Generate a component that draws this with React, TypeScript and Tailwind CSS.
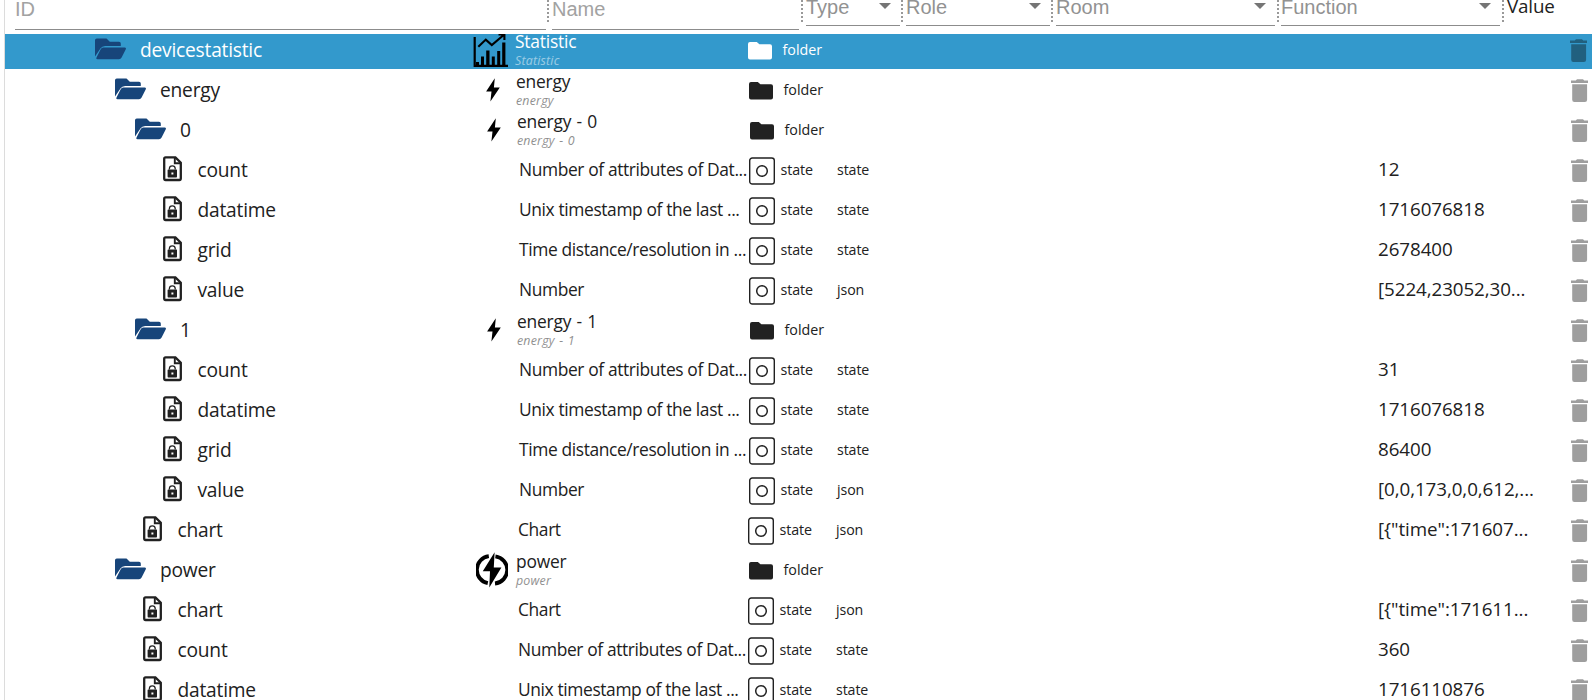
import React from "react";

type Kind = "chart" | "bolt" | "power";

type Item = {
  id: string;
  depth: number;
  name: string;
  icon?: Kind;
  folder?: boolean;
  role?: string;
  value?: string;
};

const stateRows = (depth: number, data: [string, string, string, string][]): Item[] =>
  data.map(([id, name, role, value]) => ({ id, depth, name, role, value }));

const COUNT = "Number of attributes of Dat...";
const UNIX = "Unix timestamp of the last ...";
const TIME = "Time distance/resolution in ...";

const items: Item[] = [
  { id: "devicestatistic", depth: 0, name: "Statistic", icon: "chart", folder: true },
  { id: "energy", depth: 1, name: "energy", icon: "bolt", folder: true },
  { id: "0", depth: 2, name: "energy - 0", icon: "bolt", folder: true },
  ...stateRows(3, [
    ["count", COUNT, "state", "12"],
    ["datatime", UNIX, "state", "1716076818"],
    ["grid", TIME, "state", "2678400"],
    ["value", "Number", "json", "[5224,23052,30..."],
  ]),
  { id: "1", depth: 2, name: "energy - 1", icon: "bolt", folder: true },
  ...stateRows(3, [
    ["count", COUNT, "state", "31"],
    ["datatime", UNIX, "state", "1716076818"],
    ["grid", TIME, "state", "86400"],
    ["value", "Number", "json", "[0,0,173,0,0,612,..."],
  ]),
  ...stateRows(2, [["chart", "Chart", "json", '[{"time":171607...']]),
  { id: "power", depth: 1, name: "power", icon: "power", folder: true },
  ...stateRows(2, [
    ["chart", "Chart", "json", '[{"time":171611...'],
    ["count", COUNT, "state", "360"],
    ["datatime", UNIX, "state", "1716110876"],
  ]),
];

const folderIndent = ["pl-[90px]", "pl-[110px]", "pl-[130px]"];
const stateIndent = ["", "", "pl-[138px]", "pl-[158px]"];
const folderIdCell = ["w-[510px]", "w-[511px]", "w-[512px]"];
const stateIdCell = ["", "", "w-[513px]", "w-[514px]"];

const OpenFolder = () => (
  <svg className="h-[22px] w-[32px] shrink-0" viewBox="0 0 32 22" fill="#17457a">
    <path d="M0 2.2Q0 .5 1.8 .5H11.5L14.8 3.7H24Q25.8 3.7 25.8 5.5V8H10.2Q7 8 5.4 10.6L0 18.5Z" />
    <path d="M8.2 9.4H29.8Q31.6 9.4 30.8 11.2L26.6 19.6Q25.8 21.2 24 21.2H2.4Q.6 21.2 1.5 19.6L5.7 11.2Q6.6 9.4 8.2 9.4Z" />
  </svg>
);

const LockedFile = () => (
  <svg className="h-[26px] w-[20px] shrink-0" viewBox="0 0 20 26">
    <path d="M2.6 1.4H12.4L17.8 6.8V22.6Q17.8 24 16.4 24H2.6Q1.2 24 1.2 22.6V2.8Q1.2 1.4 2.6 1.4Z" fill="none" stroke="#212121" strokeWidth="2.3" />
    <path d="M11.8 1.6V7.2H17.8" fill="none" stroke="#212121" strokeWidth="1.9" />
    <path d="M6.4 13.4V12.6Q6.4 9.8 9.3 9.8Q12.2 9.8 12.2 12.6V13.4" fill="none" stroke="#212121" strokeWidth="1.3" />
    <path fillRule="evenodd" d="M5.3 13.4H13.5Q14 13.4 14 14V20.5Q14 21.4 13.2 21.4H5.4Q4.6 21.4 4.6 20.5V14Q4.6 13.4 5.3 13.4ZM8.4 16.4V18.4H10.4V16.4Z" fill="#212121" />
  </svg>
);

const StateIcon = () => (
  <svg className="h-[28px] w-[26px] shrink-0" viewBox="0 0 26 28" fill="none" stroke="#212121">
    <rect x=".7" y="1" width="24.6" height="26" rx="2.6" strokeWidth="1.4" />
    <circle cx="13" cy="14" r="5.3" strokeWidth="1.5" />
  </svg>
);

const ClosedFolder = ({ white }: { white: boolean }) => (
  <svg className="h-[20px] w-[24px] shrink-0" viewBox="0 0 24 20" fill={white ? "#fff" : "#212121"}>
    <path d="M2 1H8.8L11.4 3.2H22Q24 3.2 24 5.2V16.6Q24 18.6 22 18.6H2Q0 18.6 0 16.6V3Q0 1 2 1Z" />
  </svg>
);

const Trash = () => (
  <svg className="h-[24px] w-[18px] shrink-0" viewBox="0 0 18 24">
    <path d="M0 1.5H4.8L6 .3H12L13.2 1.5H17V4H0ZM1.2 5.3H16.1V20.8Q16.1 23 13.9 23H3.4Q1.2 23 1.2 20.8Z" />
  </svg>
);

const NameIcon = ({ kind }: { kind: Kind }) => {
  if (kind === "chart")
    return (
      <svg className="mr-[7px] h-[35px] w-[35px]" viewBox="0 0 35 35">
        <path d="M1.7 3V31.8H35" fill="none" stroke="#000" strokeWidth="2.2" />
        <path d="M3 28H6V33H3ZM8 22.5H11V33H8ZM13.2 16.5H16.5V33H13.2ZM18.8 22.5H21.8V33H18.8ZM24.2 17H27.2V33H24.2ZM29.2 8.5H32.4V33H29.2Z" />
        <path d="M5.3 12.8L12.8 5.6L18.8 11L31 .8M25.5 .4H31.4V6" fill="none" stroke="#000" strokeWidth="2.1" />
      </svg>
    );
  if (kind === "bolt")
    return (
      <svg className="mt-[-3px] mr-[16.5px] h-[24px] w-[14px]" viewBox="0 0 14 24">
        <path d="M8.8 .3L.1 13.5H5.5L4.4 23.5L13.8 9.4H7.9Z" />
      </svg>
    );
  return (
    <svg className="-mt-[4px] mr-[8px] h-[36px] w-[32px]" viewBox="0 0 32 36">
      <path d="M12.8 4.2A13.7 13.7 0 0 0 11.8 31.2M19.4 4.3A13.7 13.7 0 0 1 19 31.5" fill="none" stroke="#000" strokeWidth="3.8" />
      <path d="M18.6 .2L6.8 19.3H14L13.3 35.6L25.4 15.6H17.8Z" />
    </svg>
  );
};

const Row = ({ item }: { item: Item }) => {
  const selected = item.depth === 0;
  return (
    <div
      className={`mb-[5px] flex h-[35px] shrink-0 items-center ${
        selected ? "bg-[#3399cc] text-white" : "text-[#212121]"
      }`}
    >
      <div className={`flex shrink-0 items-center ${item.folder ? folderIdCell[item.depth] : stateIdCell[item.depth]}`}>
        <div className={`flex min-w-0 flex-1 items-center ${item.folder ? folderIndent[item.depth] : stateIndent[item.depth]}`}>
          <span className={item.folder ? "mr-[13px] -mt-[5px] flex" : "mr-[14.5px] -mt-[5px] flex"}>
            {item.folder ? <OpenFolder /> : <LockedFile />}
          </span>
          <span className="-mt-[3px] text-[19.2px] leading-[30px] tracking-[-0.22px]">{item.id}</span>
        </div>
        {item.icon && <NameIcon kind={item.icon} />}
      </div>
      <div className={`shrink-0 whitespace-nowrap ${item.folder ? "w-[233px]" : "w-[230px]"}`}>
        {item.folder ? (
          <div className="flex h-[35px] flex-col">
            <span className="mt-[-4px] text-[17.4px] leading-[23px] tracking-[-0.2px] [word-spacing:1px]">{item.name}</span>
            <span className="text-[12.4px] leading-[15px] tracking-[0.2px] italic opacity-50 [word-spacing:1px]">{item.name}</span>
          </div>
        ) : (
          <div className="-mt-[5px] text-[17.4px] leading-[24px] tracking-[-0.38px]">{item.name}</div>
        )}
      </div>
      <div className={`flex shrink-0 items-center ${item.folder ? "w-[85px]" : "w-[88px]"}`}>
        <span className="-mt-[2px] flex">{item.folder ? <ClosedFolder white={selected} /> : <StateIcon />}</span>
        <span className={`-mt-[4px] text-[14.3px] ${item.folder ? "ml-[10.5px]" : "ml-[5.5px] tracking-[-0.1px]"}`}>
          {item.folder ? "folder" : "state"}
        </span>
      </div>
      <div className="-mt-[4px] min-w-0 flex-1 text-[14.2px] tracking-[-0.1px]">{item.role}</div>
      <div className="-mt-[4px] w-[193px] shrink-0 text-[18.8px] tracking-[-0.08px] whitespace-nowrap">{item.value}</div>
      <div className={`-mt-[1px] flex shrink-0 ${selected ? "w-[22px] fill-[#21607f]" : "w-[21px] fill-[#9e9e9e]"}`}>
        <Trash />
      </div>
    </div>
  );
};

const Splitter = () => (
  <div className="mx-[2px] h-[22px] w-[2px] shrink-0 bg-[repeating-linear-gradient(to_bottom,#999_0_2px,transparent_2px_4px)]" />
);

const TextFilter = ({ label, width }: { label: string; width: string }) => (
  <div className={`h-[30px] shrink-0 border-b border-[#8c8c8c] text-[20px] leading-[18px] text-[#a2a2a2] ${width}`}>{label}</div>
);

const SelectFilter = ({ label, width }: { label: string; width: string }) => (
  <div className={`flex h-[26px] shrink-0 justify-between border-b border-[#8c8c8c] text-[20px] leading-[14px] text-[#929292] ${width}`}>
    <span>{label}</span>
    <svg className="mt-[3px] mr-[9px] h-[6px] w-[12px]" viewBox="0 0 12 6" fill="#757575">
      <path d="M0 0H12L6 6Z" />
    </svg>
  </div>
);

export default function App() {
  return (
    <div className="flex h-[700px] w-[1592px] overflow-hidden bg-white font-['Open_Sans',sans-serif]">
      <div className="w-[5px] shrink-0 border-r border-[#dcdcdc]" />
      <div className="flex min-w-0 flex-1 flex-col">
        <div className="flex h-[34px] shrink-0 items-start pl-[10px] font-['Liberation_Sans',sans-serif]">
          <TextFilter label="ID" width="mr-[-1px] w-[531px]" />
          <Splitter />
          <TextFilter label="Name" width="ml-px w-[247px]" />
          <Splitter />
          <SelectFilter label="Type" width="ml-px w-[94px] mr-[-1px]" />
          <Splitter />
          <SelectFilter label="Role" width="ml-px w-[144px] mr-[-1px]" />
          <Splitter />
          <SelectFilter label="Room" width="ml-px w-[219px]" />
          <Splitter />
          <SelectFilter label="Function" width="w-[219px]" />
          <Splitter />
          <span className="ml-px font-['Open_Sans',sans-serif] text-[18.8px] leading-[13px] tracking-[-0.15px] text-[#212121]">Value</span>
        </div>
        {items.map((item, i) => (
          <Row key={i} item={item} />
        ))}
      </div>
    </div>
  );
}
